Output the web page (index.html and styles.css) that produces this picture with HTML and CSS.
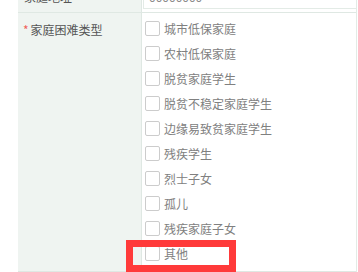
FILE: index.html
```html
<!DOCTYPE html>
<html lang="zh-CN">

<head>
  <meta charset="UTF-8">
  <meta name="viewport" content="width=device-width, initial-scale=1.0">
  <title>家庭困难类型</title>
  <link rel="stylesheet" href="styles.css">
</head>

<body>

  <div class="form">
    <div class="row row-top">
      <div class="label">家庭地址</div>
      <div class="value">
        <div class="input">00000000</div>
      </div>
    </div>

    <div class="row">
      <div class="label label-main"><span class="star">*</span>家庭困难类型</div>
      <div class="value">
        <ul class="checks">
          <li><span class="box"></span>城市低保家庭</li>
          <li><span class="box"></span>农村低保家庭</li>
          <li><span class="box"></span>脱贫家庭学生</li>
          <li><span class="box"></span>脱贫不稳定家庭学生</li>
          <li><span class="box"></span>边缘易致贫家庭学生</li>
          <li><span class="box"></span>残疾学生</li>
          <li><span class="box"></span>烈士子女</li>
          <li><span class="box"></span>孤儿</li>
          <li><span class="box"></span>残疾家庭子女</li>
          <li><span class="box"></span>其他</li>
        </ul>
      </div>
    </div>

    <div class="row row-bottom">
      <div class="label"></div>
      <div class="value"></div>
    </div>
  </div>

  <!-- highlight round the last option -->
  <div class="mark"></div>

</body>

</html>
```

FILE: styles.css
```css
body {
  margin: 0;
  background-color: #fff;
  font-family: "Noto Sans CJK SC", "Noto Sans", sans-serif;
  font-size: 12px;
  overflow: hidden;
}

.form {
  margin: -12px 1px 0 18px;
  border-right: 1px solid #e3ebe6;
}

.row {
  display: flex;
  border-bottom: 1px solid #dfe8e3;
}

.label {
  width: 124px;
  flex-shrink: 0;
  background-color: #eff4f1;
  border-right: 1px solid #dfe8e3;
  color: #555;
  padding-left: 6px;
  box-sizing: border-box;
}

.value {
  flex: 1;
  padding-left: 3px;
}

.row-top .label {
  padding-top: 1px;
  line-height: 16px;
}

.row-top .value {
  padding: 1px 0 3px 1px;
}

.input {
  height: 20px;
  border: 1px solid #e3ebe6;
  border-right: none;
  padding-left: 5px;
  color: #888;
  line-height: 14px;
  box-sizing: border-box;
}

.label-main {
  padding-top: 9px;
  padding-left: 5px;
  line-height: 16px;
}

.star {
  color: #f0605a;
  margin-right: 2px;
}

.checks {
  list-style: none;
  margin: 0;
  padding: 3px 0 5px;
}

.checks li {
  display: flex;
  align-items: center;
  height: 25px;
  color: #808080;
}

.box {
  width: 15px;
  height: 15px;
  border: 1px solid #ccc;
  border-radius: 2px;
  background: #fff;
  box-sizing: border-box;
  margin-right: 4px;
}

.row-bottom {
  height: 10px;
  border-bottom: none;
}

.mark {
  position: absolute;
  left: 126px;
  top: 240px;
  width: 110px;
  height: 32px;
  border: 7px solid #ff3a3a;
  box-sizing: border-box;
}
```
